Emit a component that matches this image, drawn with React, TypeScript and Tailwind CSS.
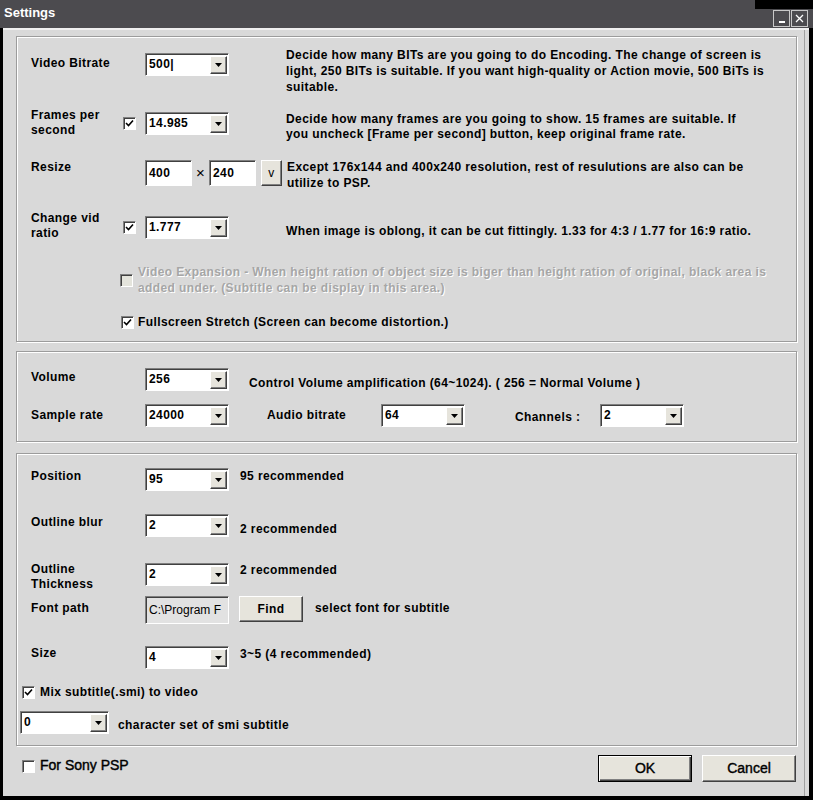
import React from "react";

const Check = ({ checked = false, disabled = false }: { checked?: boolean; disabled?: boolean }) => (
  <div
    className={`flex h-[13px] w-[13px] shrink-0 items-center justify-center border border-[#808080] border-b-white border-r-white shadow-[inset_1px_1px_0_#404040] ${
      disabled ? "bg-[#e4e4dc]" : "bg-white"
    }`}
  >
    {checked && (
      <svg width="9" height="9" viewBox="0 0 9 9">
        <path d="M1 4 L3.5 6.5 L8 1.5" fill="none" stroke="#000" strokeWidth="1.6" />
      </svg>
    )}
  </div>
);

const Combo = ({ value, w = "w-[84px]" }: { value: string; w?: string }) => (
  <div
    className={`flex h-[23px] ${w} shrink-0 border border-[#7f7f7f] border-b-white border-r-white bg-white shadow-[inset_1px_1px_0_#404040]`}
  >
    <div className="flex-1 pl-[3px] pt-[2px] leading-[17px]">{value}</div>
    <div className="mb-[1px] mr-[1px] mt-[2px] flex w-[17px] items-center justify-center border border-white border-b-[#404040] border-r-[#404040] bg-[#e6e4dc] shadow-[inset_-1px_-1px_0_#808080]">
      <svg width="7" height="4" viewBox="0 0 7 4">
        <path d="M0 0 H7 L3.5 4 Z" fill="#000" />
      </svg>
    </div>
  </div>
);

const Field = ({ value, w = "w-[47px]", h = "h-[26px]", bg = "bg-white", extra = "" }: { value: string; w?: string; h?: string; bg?: string; extra?: string }) => (
  <div
    className={`${w} ${h} ${bg} ${extra} shrink-0 overflow-hidden whitespace-nowrap border border-[#7f7f7f] border-b-white border-r-white pl-[3px] pt-[4px] leading-[16px] shadow-[inset_1px_1px_0_#404040]`}
  >
    {value}
  </div>
);

const Btn = ({ label, w, h, cls = "" }: { label: string; w: string; h: string; cls?: string }) => (
  <div
    className={`${w} ${h} ${cls} flex shrink-0 items-center justify-center border border-white border-b-[#404040] border-r-[#404040] bg-[#e6e4dc] shadow-[inset_-1px_-1px_0_#808080]`}
  >
    {label}
  </div>
);

const groupBox =
  "ml-[13px] w-[781px] border border-[#9c9c9c] shadow-[inset_1px_1px_0_#fff,1px_1px_0_#fff]";

export default function App() {
  return (
    <div className="relative flex h-[800px] w-[813px] flex-col bg-black font-['Liberation_Sans',Arial,sans-serif] text-[12px] font-bold tracking-[0.4px] text-black">
      {/* title bar */}
      <div className="relative flex h-[28px] shrink-0 bg-[#4c4b4f] pl-[4px] pr-[5px]">
        <div className="pt-[5px] text-[13px] leading-[16px] tracking-normal text-white">Settings</div>
        <div className="ml-auto mt-[10px] flex gap-[1px]">
          <div className="flex h-[17px] w-[17px] items-end justify-center border border-[#c8c8c8] bg-[#4c4b4f] pb-[3px]">
            <div className="h-[2px] w-[6px] bg-white" />
          </div>
          <div className="flex h-[17px] w-[17px] items-center justify-center border border-[#c8c8c8] bg-[#4c4b4f]">
            <svg width="9" height="9" viewBox="0 0 9 9">
              <path d="M1 1 L8 8 M8 1 L1 8" stroke="#fff" strokeWidth="1.3" />
            </svg>
          </div>
        </div>
        <div className="absolute right-0 top-0 h-[9px] w-[58px] bg-black" />
      </div>

      {/* body */}
      <div className="mb-[4px] ml-[3px] mr-[4px] flex flex-1 flex-col border-t-2 border-[#efefef] bg-[#d9d9d9] shadow-[inset_-4px_0_0_#d9d9d9,inset_-5px_0_0_#a0a0a0]">
        {/* group 1: video */}
        <div className={`${groupBox} mt-[6px] flex h-[306px] flex-col pl-[14px] pt-[10px]`}>
          <div className="flex h-[61px] items-start">
            <div className="mt-[8px] w-[92px] leading-[16px]">Video Bitrate</div>
            <div className="w-[22px]" />
            <div className="mt-[6px]">
              <Combo value="500|" />
            </div>
            <div className="ml-[57px] whitespace-nowrap leading-[16px]">
              Decide how many BITs are you going to do Encoding. The change of screen is
              <br />
              light, 250 BITs is suitable. If you want high-quality or Action movie, 500 BiTs is
              <br />
              suitable.
            </div>
          </div>

          <div className="flex h-[51px] items-start">
            <div className="w-[92px] leading-[15px]">
              Frames per
              <br />
              second
            </div>
            <div className="mt-[9px] w-[22px]">
              <Check checked />
            </div>
            <div className="mt-[4px]">
              <Combo value="14.985" />
            </div>
            <div className="ml-[57px] mt-[4px] whitespace-nowrap leading-[15px]">
              Decide how many frames are you going to show. 15 frames are suitable. If
              <br />
              you uncheck [Frame per second] button, keep original frame rate.
            </div>
          </div>

          <div className="flex h-[52px] items-start">
            <div className="w-[92px] leading-[16px]">Resize</div>
            <div className="w-[22px]" />
            <div className="mt-[1px] flex items-start">
              <Field value="400" />
              <div className="w-[17px] pt-[6px] text-center text-[15px] font-normal leading-[14px]">×</div>
              <Field value="240" />
              <Btn label="v" w="w-[21px]" h="h-[26px]" cls="ml-[5px] font-normal" />
            </div>
            <div className="ml-[5px] whitespace-nowrap leading-[16px]">
              Except 176x144 and 400x240 resolution, rest of resulutions are also can be
              <br />
              utilize to PSP.
            </div>
          </div>

          <div className="flex h-[53px] items-start">
            <div className="w-[92px] leading-[15px]">
              Change vid
              <br />
              ratio
            </div>
            <div className="mt-[10px] w-[22px]">
              <Check checked />
            </div>
            <div className="mt-[5px]">
              <Combo value="1.777" />
            </div>
            <div className="ml-[57px] mt-[12px] whitespace-nowrap leading-[16px]">
              When image is oblong, it can be cut fittingly. 1.33 for 4:3 / 1.77 for 16:9 ratio.
            </div>
          </div>

          <div className="flex h-[50px] items-start pl-[89px]">
            <div className="mt-[10px]">
              <Check disabled />
            </div>
            <div className="ml-[5px] whitespace-nowrap leading-[16px] text-[#a6a6a6] [text-shadow:1px_1px_0_#fff]">
              Video Expansion - When height ration of object size is biger than height ration of original, black area is
              <br />
              added under. (Subtitle can be display in this area.)
            </div>
          </div>

          <div className="flex items-start pl-[90px]">
            <div className="mt-[2px]">
              <Check checked />
            </div>
            <div className="ml-[4px] whitespace-nowrap leading-[16px]">
              Fullscreen Stretch (Screen can become distortion.)
            </div>
          </div>
        </div>

        {/* group 2: audio */}
        <div className={`${groupBox} mt-[9px] flex h-[91px] flex-col pl-[14px] pt-[16px]`}>
          <div className="flex h-[36px] items-start">
            <div className="mt-[1px] w-[114px] leading-[16px]">Volume</div>
            <Combo value="256" />
            <div className="ml-[20px] mt-[7px] whitespace-nowrap leading-[16px]">
              Control Volume amplification (64~1024). ( 256 = Normal Volume )
            </div>
          </div>
          <div className="flex items-start">
            <div className="mt-[3px] w-[114px] leading-[16px]">Sample rate</div>
            <Combo value="24000" />
            <div className="ml-[38px] mt-[3px] w-[114px] leading-[16px]">Audio bitrate</div>
            <Combo value="64" />
            <div className="ml-[50px] mt-[5px] w-[85px] leading-[16px]">Channels :</div>
            <Combo value="2" />
          </div>
        </div>

        {/* group 3: subtitle */}
        <div className={`${groupBox} mt-[11px] flex h-[293px] flex-col pt-[14px]`}>
          <div className="flex h-[46px] items-start pl-[14px]">
            <div className="w-[114px] leading-[16px]">Position</div>
            <Combo value="95" />
            <div className="ml-[11px] leading-[16px]">95 recommended</div>
          </div>
          <div className="flex h-[48px] items-start pl-[14px]">
            <div className="w-[114px] leading-[16px]">Outline blur</div>
            <Combo value="2" />
            <div className="ml-[11px] mt-[7px] leading-[16px]">2 recommended</div>
          </div>
          <div className="flex h-[34px] items-start pl-[14px]">
            <div className="w-[114px] leading-[15px]">
              Outline
              <br />
              Thickness
            </div>
            <div className="mt-[1px]">
              <Combo value="2" />
            </div>
            <div className="ml-[11px] leading-[16px]">2 recommended</div>
          </div>
          <div className="flex h-[49px] items-start pl-[14px]">
            <div className="mt-[4px] w-[114px] leading-[16px]">Font path</div>
            <Field value="C:\Program F" w="w-[84px]" h="h-[28px]" bg="bg-[#e2e2e2]" extra="pt-[5px] font-normal tracking-normal" />
            <Btn label="Find" w="w-[64px]" h="h-[26px]" cls="ml-[10px]" />
            <div className="ml-[12px] mt-[4px] leading-[16px]">select font for subtitle</div>
          </div>
          <div className="flex h-[35px] items-start pl-[14px]">
            <div className="w-[114px] leading-[16px]">Size</div>
            <div className="mt-[1px]">
              <Combo value="4" />
            </div>
            <div className="ml-[11px] mt-[1px] leading-[16px]">3~5 (4 recommended)</div>
          </div>
          <div className="flex h-[26px] items-start pl-[5px]">
            <div className="mt-[6px]">
              <Check checked />
            </div>
            <div className="ml-[5px] mt-[4px] leading-[16px]">Mix subtitle(.smi) to video</div>
          </div>
          <div className="flex items-start pl-[3px]">
            <div className="mt-[5px]">
              <Combo value="0" w="w-[89px]" />
            </div>
            <div className="ml-[9px] mt-[11px] leading-[16px]">character set of smi subtitle</div>
          </div>
        </div>

        {/* bottom */}
        <div className="mt-[9px] flex items-start pl-[19px] pr-[13px] text-[14px] font-normal tracking-normal [-webkit-text-stroke:0.4px_#000]">
          <div className="mt-[5px]">
            <Check />
          </div>
          <div className="ml-[5px] mt-[2px] leading-[16px]">For Sony PSP</div>
          <div className="ml-auto flex gap-[10px]">
            <div className="flex h-[27px] w-[94px] items-center justify-center border border-black bg-[#e6e4dc] shadow-[inset_1px_1px_0_#fff,inset_-1px_-1px_0_#404040,inset_-2px_-2px_0_#808080]">
              OK
            </div>
            <Btn label="Cancel" w="w-[94px]" h="h-[27px]" />
          </div>
        </div>
      </div>
    </div>
  );
}
